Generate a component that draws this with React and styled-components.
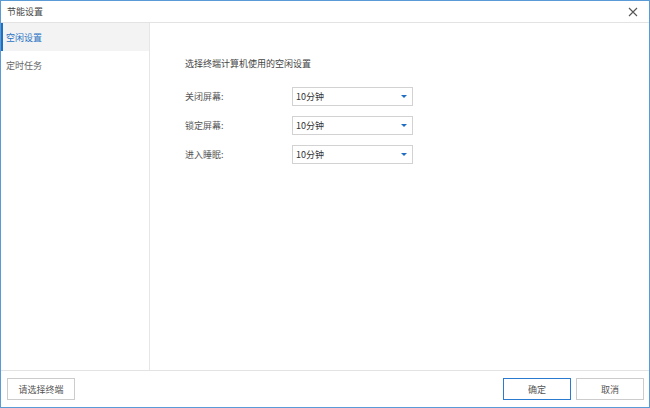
import React from 'react'
import styled, { createGlobalStyle } from 'styled-components'

const GlobalStyle = createGlobalStyle`
  html, body { margin: 0; padding: 0; background: #ffffff; }
  body {
    font-family: "Noto Sans CJK SC", "Noto Sans", sans-serif;
    font-size: 9px;
    color: #444444;
  }
`

const Window = styled.div`
  width: 650px;
  height: 408px;
  box-sizing: border-box;
  border: 1px solid #5b9bd5;
  display: flex;
  flex-direction: column;
  background: #ffffff;
`

const TitleBar = styled.div`
  height: 21px;
  flex: none;
  display: flex;
  align-items: center;
  justify-content: space-between;
  padding: 0 10px 0 6px;
  border-bottom: 1px solid #e3e3e3;
`

const Title = styled.span`
  font-size: 9px;
  color: #444444;
`

const Close = styled.button`
  border: none;
  background: none;
  padding: 0;
  width: 12px;
  height: 12px;
  display: flex;
  align-items: center;
  justify-content: center;
  cursor: pointer;
`

const Body = styled.div`
  flex: 1;
  display: flex;
  min-height: 0;
`

const Sidebar = styled.div`
  width: 148px;
  flex: none;
  border-right: 1px solid #e6e6e6;
  display: flex;
  flex-direction: column;
`

const NavItem = styled.div`
  height: 28px;
  display: flex;
  align-items: center;
  padding-left: ${p => (p.$active ? '3px' : '5px')};
  border-left: ${p => (p.$active ? '2px solid #1e6fc2' : 'none')};
  background: ${p => (p.$active ? '#f3f3f3' : 'transparent')};
  color: ${p => (p.$active ? '#2a74c4' : '#666666')};
  font-size: 9px;
`

const Content = styled.div`
  flex: 1;
  padding: 34px 0 0 35px;
  display: flex;
  flex-direction: column;
`

const Heading = styled.div`
  font-size: 9px;
  color: #444444;
  line-height: 13px;
  margin-bottom: 17px;
`

const Form = styled.div`
  display: flex;
  flex-direction: column;
  gap: 10px;
`

const Row = styled.div`
  display: flex;
  align-items: center;
  height: 19px;
`

const Label = styled.span`
  width: 107px;
  font-size: 9px;
  color: #555555;
`

const Select = styled.div`
  width: 121px;
  height: 19px;
  box-sizing: border-box;
  border: 1px solid #d2d2d2;
  display: flex;
  align-items: center;
  justify-content: space-between;
  padding: 0 5px 0 3px;
  font-size: 9px;
  color: #333333;
  background: #ffffff;
`

const Arrow = styled.span`
  width: 0;
  height: 0;
  border-left: 3.5px solid transparent;
  border-right: 3.5px solid transparent;
  border-top: 3.5px solid #1e6fc2;
`

const Footer = styled.div`
  height: 36px;
  flex: none;
  border-top: 1px solid #e3e3e3;
  display: flex;
  align-items: center;
  justify-content: space-between;
  padding: 0 5px 0 6px;
`

const Actions = styled.div`
  display: flex;
  gap: 5px;
`

const Button = styled.button`
  width: 68px;
  height: 22px;
  box-sizing: border-box;
  border: 1px solid ${p => (p.$primary ? '#2a7bd0' : '#cccccc')};
  background: #ffffff;
  font-family: inherit;
  font-size: 9px;
  color: #555555;
  padding: 0;
  cursor: pointer;
`

const rows = ['关闭屏幕:', '锁定屏幕:', '进入睡眠:']

export default function App() {
  return (
    <>
      <GlobalStyle />
      <Window>
        <TitleBar>
          <Title>节能设置</Title>
          <Close aria-label="关闭">
            <svg width="10" height="10" viewBox="0 0 10 10">
              <path d="M1 1L9 9M9 1L1 9" stroke="#555" strokeWidth="1.1" />
            </svg>
          </Close>
        </TitleBar>
        <Body>
          <Sidebar>
            <NavItem $active>空闲设置</NavItem>
            <NavItem>定时任务</NavItem>
          </Sidebar>
          <Content>
            <Heading>选择终端计算机使用的空闲设置</Heading>
            <Form>
              {rows.map(label => (
                <Row key={label}>
                  <Label>{label}</Label>
                  <Select>
                    <span>10分钟</span>
                    <Arrow />
                  </Select>
                </Row>
              ))}
            </Form>
          </Content>
        </Body>
        <Footer>
          <Button>请选择终端</Button>
          <Actions>
            <Button $primary>确定</Button>
            <Button>取消</Button>
          </Actions>
        </Footer>
      </Window>
    </>
  )
}
